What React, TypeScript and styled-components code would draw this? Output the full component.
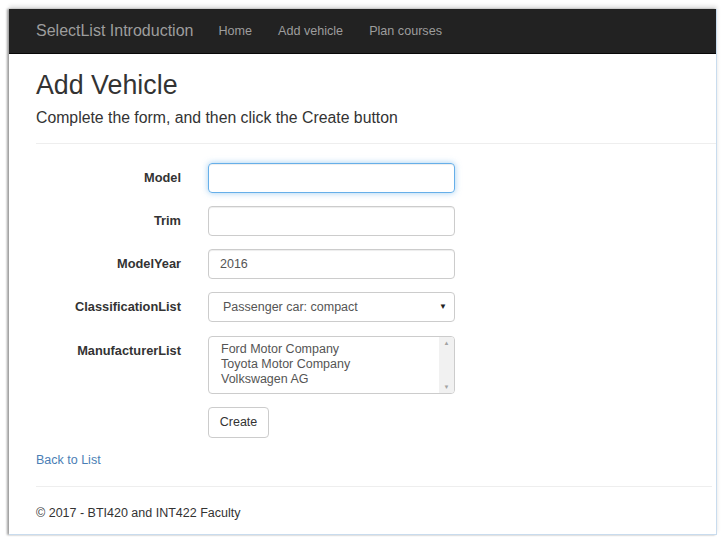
import * as React from "react";
import styled, { createGlobalStyle } from "styled-components";

const GlobalStyle = createGlobalStyle`
  html, body {
    margin: 0;
    padding: 0;
    background: #ffffff;
  }
  body {
    font-family: "Liberation Sans", Arial, Helvetica, sans-serif;
    color: #333;
  }
`;

const fields = [
  { label: "Model", value: "", focused: true },
  { label: "Trim", value: "" },
  { label: "ModelYear", value: "2016" },
];

const manufacturers = ["Ford Motor Company", "Toyota Motor Company", "Volkswagen AG"];

const App: React.FC = () => {
  return (
    <Frame>
      <GlobalStyle />
      <Window>
        <Navbar>
          <Brand>SelectList Introduction</Brand>
          <NavLinks>
            <NavLink>Home</NavLink>
            <NavLink>Add vehicle</NavLink>
            <NavLink>Plan courses</NavLink>
          </NavLinks>
        </Navbar>

        <Body>
          <Title>Add Vehicle</Title>
          <Subtitle>Complete the form, and then click the Create button</Subtitle>
          <Rule />

          <Form>
            {fields.map((f) => (
              <React.Fragment key={f.label}>
                <Label>{f.label}</Label>
                <TextBox focused={f.focused}>{f.value}</TextBox>
              </React.Fragment>
            ))}

            <Label>ClassificationList</Label>
            <SelectBox>
              <span>Passenger car: compact</span>
              <span className="caret">▼</span>
            </SelectBox>

            <Label top>ManufacturerList</Label>
            <ListBox>
              <div className="options">
                {manufacturers.map((m) => (
                  <div key={m}>{m}</div>
                ))}
              </div>
              <ScrollTrack>
                <span>▲</span>
                <span>▼</span>
              </ScrollTrack>
            </ListBox>

            <span />
            <div>
              <Button>Create</Button>
            </div>
          </Form>

          <BackLink>Back to List</BackLink>
          <Rule className="bottom" />
          <Footer>© 2017 - BTI420 and INT422 Faculty</Footer>
        </Body>
      </Window>
    </Frame>
  );
};

const Frame = styled.div`
  width: 721px;
  height: 539px;
  box-sizing: border-box;
  padding: 9px 4px 4px 9px;
  background: #fff;
  display: flex;
`;

const Window = styled.div`
  flex: 1;
  display: flex;
  flex-direction: column;
  background: #fff;
  border-right: 1px solid #c9dcee;
  border-bottom: 1px solid #c9dcee;
  box-shadow: -2px 0 2px rgba(0, 0, 0, 0.35), 0 -3px 4px rgba(0, 0, 0, 0.12);
`;

const Navbar = styled.div`
  height: 45px;
  background: #222;
  display: flex;
  align-items: center;
  padding-left: 27px;
  border-bottom: 1px solid #080808;
  box-sizing: border-box;
`;

const Brand = styled.div`
  font-size: 16px;
  color: #9d9d9d;
  margin-right: 25px;
`;

const NavLinks = styled.div`
  display: flex;
  gap: 26px;
`;

const NavLink = styled.span`
  font-size: 12.6px;
  color: #9d9d9d;
`;

const Body = styled.div`
  padding: 0 0 0 27px;
  display: flex;
  flex-direction: column;
`;

const Title = styled.h2`
  margin: 17px 0 0;
  font-size: 26.8px;
  font-weight: 500;
  line-height: 1.1;
  color: #333;
`;

const Subtitle = styled.h4`
  margin: 9px 0 0;
  font-size: 15.8px;
  font-weight: 500;
  line-height: 1.1;
  color: #333;
`;

const Rule = styled.div`
  height: 1px;
  background: #eee;
  margin-top: 16px;

  &.bottom {
    margin-top: 18px;
    margin-right: 4px;
  }
`;

const Form = styled.div`
  display: grid;
  grid-template-columns: 145px 247px;
  column-gap: 27px;
  row-gap: 13px;
  align-items: center;
  margin-top: 19px;
`;

const Label = styled.label<{ top?: boolean }>`
  font-size: 12.8px;
  font-weight: bold;
  color: #333;
  text-align: right;
  align-self: ${(p) => (p.top ? "start" : "center")};
  padding-top: ${(p) => (p.top ? "8px" : "0")};
`;

const TextBox = styled.div<{ focused?: boolean }>`
  height: 30px;
  box-sizing: border-box;
  border: 1px solid ${(p) => (p.focused ? "#66afe9" : "#ccc")};
  border-radius: 4px;
  padding: 0 11px;
  display: flex;
  align-items: center;
  font-size: 12.5px;
  color: #555;
  box-shadow: ${(p) =>
    p.focused
      ? "inset 0 1px 1px rgba(0,0,0,.075), 0 0 6px rgba(102,175,233,.6)"
      : "inset 0 1px 1px rgba(0,0,0,.075)"};
`;

const SelectBox = styled.div`
  height: 30px;
  box-sizing: border-box;
  border: 1px solid #ccc;
  border-radius: 4px;
  padding: 0 7px 0 14px;
  display: flex;
  align-items: center;
  justify-content: space-between;
  font-size: 12.5px;
  color: #555;

  .caret {
    font-size: 8px;
    color: #222;
  }
`;

const ListBox = styled.div`
  height: 58px;
  box-sizing: border-box;
  border: 1px solid #ccc;
  border-radius: 4px;
  display: flex;
  overflow: hidden;
  margin-top: 1px;

  .options {
    flex: 1;
    padding: 5px 12px;
    font-size: 12.5px;
    line-height: 15px;
    color: #555;
  }
`;

const ScrollTrack = styled.div`
  width: 15px;
  background: #f1f1f1;
  display: flex;
  flex-direction: column;
  justify-content: space-between;
  align-items: center;
  padding: 3px 0;
  font-size: 6px;
  color: #a3a3a3;
`;

const Button = styled.button`
  height: 31px;
  width: 61px;
  border: 1px solid #ccc;
  border-radius: 4px;
  background: #fff;
  font-family: "Liberation Sans", Arial, sans-serif;
  font-size: 12.5px;
  color: #333;
  padding: 0;
`;

const BackLink = styled.a`
  margin-top: 15px;
  font-size: 12.5px;
  color: #4a7eb5;
  line-height: 15px;
`;

const Footer = styled.p`
  margin: 19px 0 0;
  font-size: 12.5px;
  color: #333;
`;

export default App;
